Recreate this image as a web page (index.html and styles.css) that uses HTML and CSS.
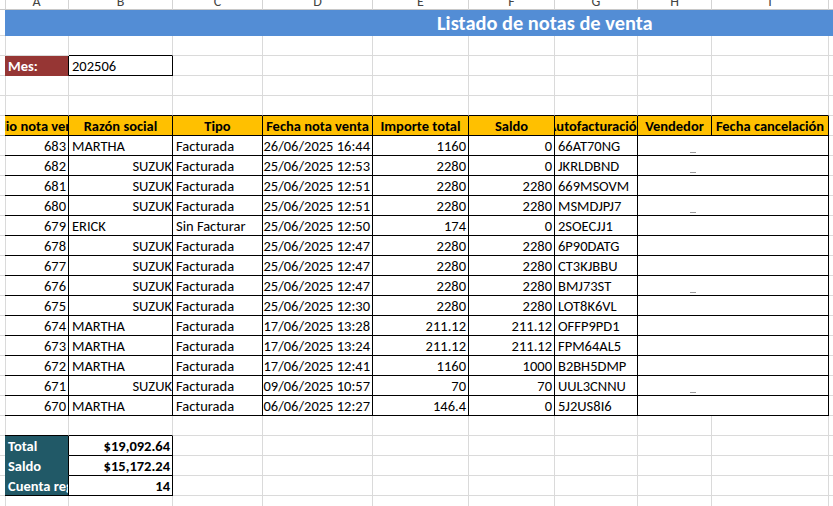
FILE: index.html
```html
<!DOCTYPE html>
<html lang="es">
<head>
<meta charset="utf-8">
<title>Listado de notas de venta</title>
<link rel="stylesheet" href="styles.css">
</head>
<body>
<div class="sheet">
  <div class="row colhead">
    <div class="c stub"></div>
    <div class="c ch">A</div><div class="c ch">B</div><div class="c ch">C</div><div class="c ch">D</div><div class="c ch">E</div><div class="c ch">F</div><div class="c ch">G</div><div class="c ch">H</div><div class="c ch">I</div><div class="c ch"></div>
  </div>
  <div class="row title-row">
    <div class="c stub"></div>
    <div class="title">Listado de notas de venta</div>
  </div>
  <div class="row">
    <div class="c stub"></div>
    <div class="c"></div><div class="c bb"></div><div class="c"></div><div class="c"></div><div class="c"></div><div class="c"></div><div class="c"></div><div class="c"></div><div class="c"></div><div class="c"></div>
  </div>
  <div class="row">
    <div class="c stub"></div>
    <div class="c mes br">Mes:</div><div class="c bb br">202506</div><div class="c"></div><div class="c"></div><div class="c"></div><div class="c"></div><div class="c"></div><div class="c"></div><div class="c"></div><div class="c"></div>
  </div>
  <div class="row">
    <div class="c stub"></div>
    <div class="c"></div><div class="c"></div><div class="c"></div><div class="c"></div><div class="c"></div><div class="c"></div><div class="c"></div><div class="c"></div><div class="c"></div><div class="c"></div>
  </div>
  <div class="row">
    <div class="c stub"></div>
    <div class="c bb"></div><div class="c bb"></div><div class="c bb"></div><div class="c bb"></div><div class="c bb"></div><div class="c bb"></div><div class="c bb"></div><div class="c bb"></div><div class="c bb"></div><div class="c"></div>
  </div>
  <div class="row head">
    <div class="c stub"></div>
    <div class="c hc"><span>Folio nota venta</span></div>
    <div class="c hc"><span>Razón social</span></div>
    <div class="c hc"><span>Tipo</span></div>
    <div class="c hc"><span>Fecha nota venta</span></div>
    <div class="c hc"><span>Importe total</span></div>
    <div class="c hc"><span>Saldo</span></div>
    <div class="c hc"><span>Autofacturación</span></div>
    <div class="c hc"><span>Vendedor</span></div>
    <div class="c hc"><span>Fecha cancelación</span></div>
    <div class="c"></div>
  </div>
  <div id="rows"></div>
  <div class="row">
    <div class="c stub"></div>
    <div class="c bb"></div><div class="c bb"></div><div class="c"></div><div class="c"></div><div class="c"></div><div class="c"></div><div class="c"></div><div class="c"></div><div class="c"></div><div class="c"></div>
  </div>
  <div class="row">
    <div class="c stub"></div>
    <div class="c lab br">Total</div><div class="c num bold bb br">$19,092.64</div><div class="c"></div><div class="c"></div><div class="c"></div><div class="c"></div><div class="c"></div><div class="c"></div><div class="c"></div><div class="c"></div>
  </div>
  <div class="row">
    <div class="c stub"></div>
    <div class="c lab br">Saldo</div><div class="c num bold bb br">$15,172.24</div><div class="c"></div><div class="c"></div><div class="c"></div><div class="c"></div><div class="c"></div><div class="c"></div><div class="c"></div><div class="c"></div>
  </div>
  <div class="row">
    <div class="c stub"></div>
    <div class="c lab lab-last bb br">Cuenta registros</div><div class="c num bold bb br">14</div><div class="c"></div><div class="c"></div><div class="c"></div><div class="c"></div><div class="c"></div><div class="c"></div><div class="c"></div><div class="c"></div>
  </div>
  <div class="row">
    <div class="c stub"></div>
    <div class="c"></div><div class="c"></div><div class="c"></div><div class="c"></div><div class="c"></div><div class="c"></div><div class="c"></div><div class="c"></div><div class="c"></div><div class="c"></div>
  </div>
</div>
<script src="app.js"></script>
</body>
</html>
```
FILE: app.js
```js
const data = [
  ["683","MARTHA","Facturada","26/06/2025 16:44","1160","0","66AT70NG",true],
  ["682","SUZUK","Facturada","25/06/2025 12:53","2280","0","JKRLDBND",true],
  ["681","SUZUK","Facturada","25/06/2025 12:51","2280","2280","669MSOVM",false],
  ["680","SUZUK","Facturada","25/06/2025 12:51","2280","2280","MSMDJPJ7",true],
  ["679","ERICK","Sin Facturar","25/06/2025 12:50","174","0","2SOECJJ1",false],
  ["678","SUZUK","Facturada","25/06/2025 12:47","2280","2280","6P90DATG",false],
  ["677","SUZUK","Facturada","25/06/2025 12:47","2280","2280","CT3KJBBU",false],
  ["676","SUZUK","Facturada","25/06/2025 12:47","2280","2280","BMJ73ST",true],
  ["675","SUZUK","Facturada","25/06/2025 12:30","2280","2280","LOT8K6VL",false],
  ["674","MARTHA","Facturada","17/06/2025 13:28","211.12","211.12","OFFP9PD1",false],
  ["673","MARTHA","Facturada","17/06/2025 13:24","211.12","211.12","FPM64AL5",false],
  ["672","MARTHA","Facturada","17/06/2025 12:41","1160","1000","B2BH5DMP",false],
  ["671","SUZUK","Facturada","09/06/2025 10:57","70","70","UUL3CNNU",true],
  ["670","MARTHA","Facturada","06/06/2025 12:27","146.4","0","5J2US8I6",false]
];
const host = document.getElementById("rows");
let html = "";
for (const r of data) {
  const nameCls = r[1] === "SUZUK" ? "c bb br name-r" : "c bb br";
  html += '<div class="row">' +
    '<div class="c stub"></div>' +
    '<div class="c bb br num">' + r[0] + '</div>' +
    '<div class="' + nameCls + '">' + r[1] + '</div>' +
    '<div class="c bb br">' + r[2] + '</div>' +
    '<div class="c bb br num">' + r[3] + '</div>' +
    '<div class="c bb br num">' + r[4] + '</div>' +
    '<div class="c bb br num">' + r[5] + '</div>' +
    '<div class="c bb br">' + r[6] + '</div>' +
    '<div class="c bb br span2">' + (r[7] ? '<span class="mark"></span>' : '') + '</div>' +
    '<div class="c"></div>' +
    '</div>';
}
host.innerHTML = html;
```
FILE: styles.css
```css
html, body {
  margin: 0;
  padding: 0;
  background: #fff;
}
body {
  width: 833px;
  height: 506px;
  overflow: hidden;
  font-family: Calibri, Carlito, Lato, "Liberation Sans", sans-serif;
  font-size: 14.5px;
  color: #000;
}
.sheet {
  display: flex;
  flex-direction: column;
}
.row {
  display: grid;
  grid-template-columns: 5px 64px 104px 90px 110px 96px 86px 83px 74px 117px 20px;
  height: 20px;
}
.c {
  box-sizing: border-box;
  border-right: 1px solid #dadada;
  border-bottom: 1px solid #dadada;
  overflow: hidden;
  white-space: nowrap;
  display: flex;
  align-items: flex-end;
  padding: 0 2px 0 3px;
  line-height: 18px;
}
.bb { border-bottom-color: #000; }
.br { border-right-color: #000; }
.num { justify-content: flex-end; }
.bold { font-weight: bold; }
.name-r { justify-content: flex-end; padding-right: 0; }
.span2 { grid-column: span 2; padding-left: 52px; align-items: flex-end; }
.mark {
  display: block;
  width: 6px;
  height: 1px;
  background: #9a9a9a;
  margin-bottom: 2px;
}

.colhead { height: 10px; }
.colhead .c {
  border-bottom-color: #c8c8c8;
  border-right-color: #d4d4d4;
}
.ch {
  justify-content: center;
  color: #444;
  line-height: 14px;
  font-size: 14px;
  padding: 0;
}

.title-row { height: 26px; }
.title {
  grid-column: 2 / -1;
  background: #538dd5;
  color: #fff;
  font-weight: bold;
  font-size: 20.4px;
  line-height: 26px;
  padding-left: 432px;
  white-space: nowrap;
  overflow: hidden;
}

.mes {
  background: #963634;
  color: #fff;
  font-weight: bold;
  border-bottom-color: #963634;
}

.head .hc {
  background: #ffc000;
  font-weight: bold;
  justify-content: center;
  padding: 0;
  border-bottom-color: #000;
  border-right-color: #000;
}

.lab {
  background: #215967;
  color: #fff;
  font-weight: bold;
  border-bottom-color: #215967;
}
.lab-last { border-bottom-color: #000; }
```
